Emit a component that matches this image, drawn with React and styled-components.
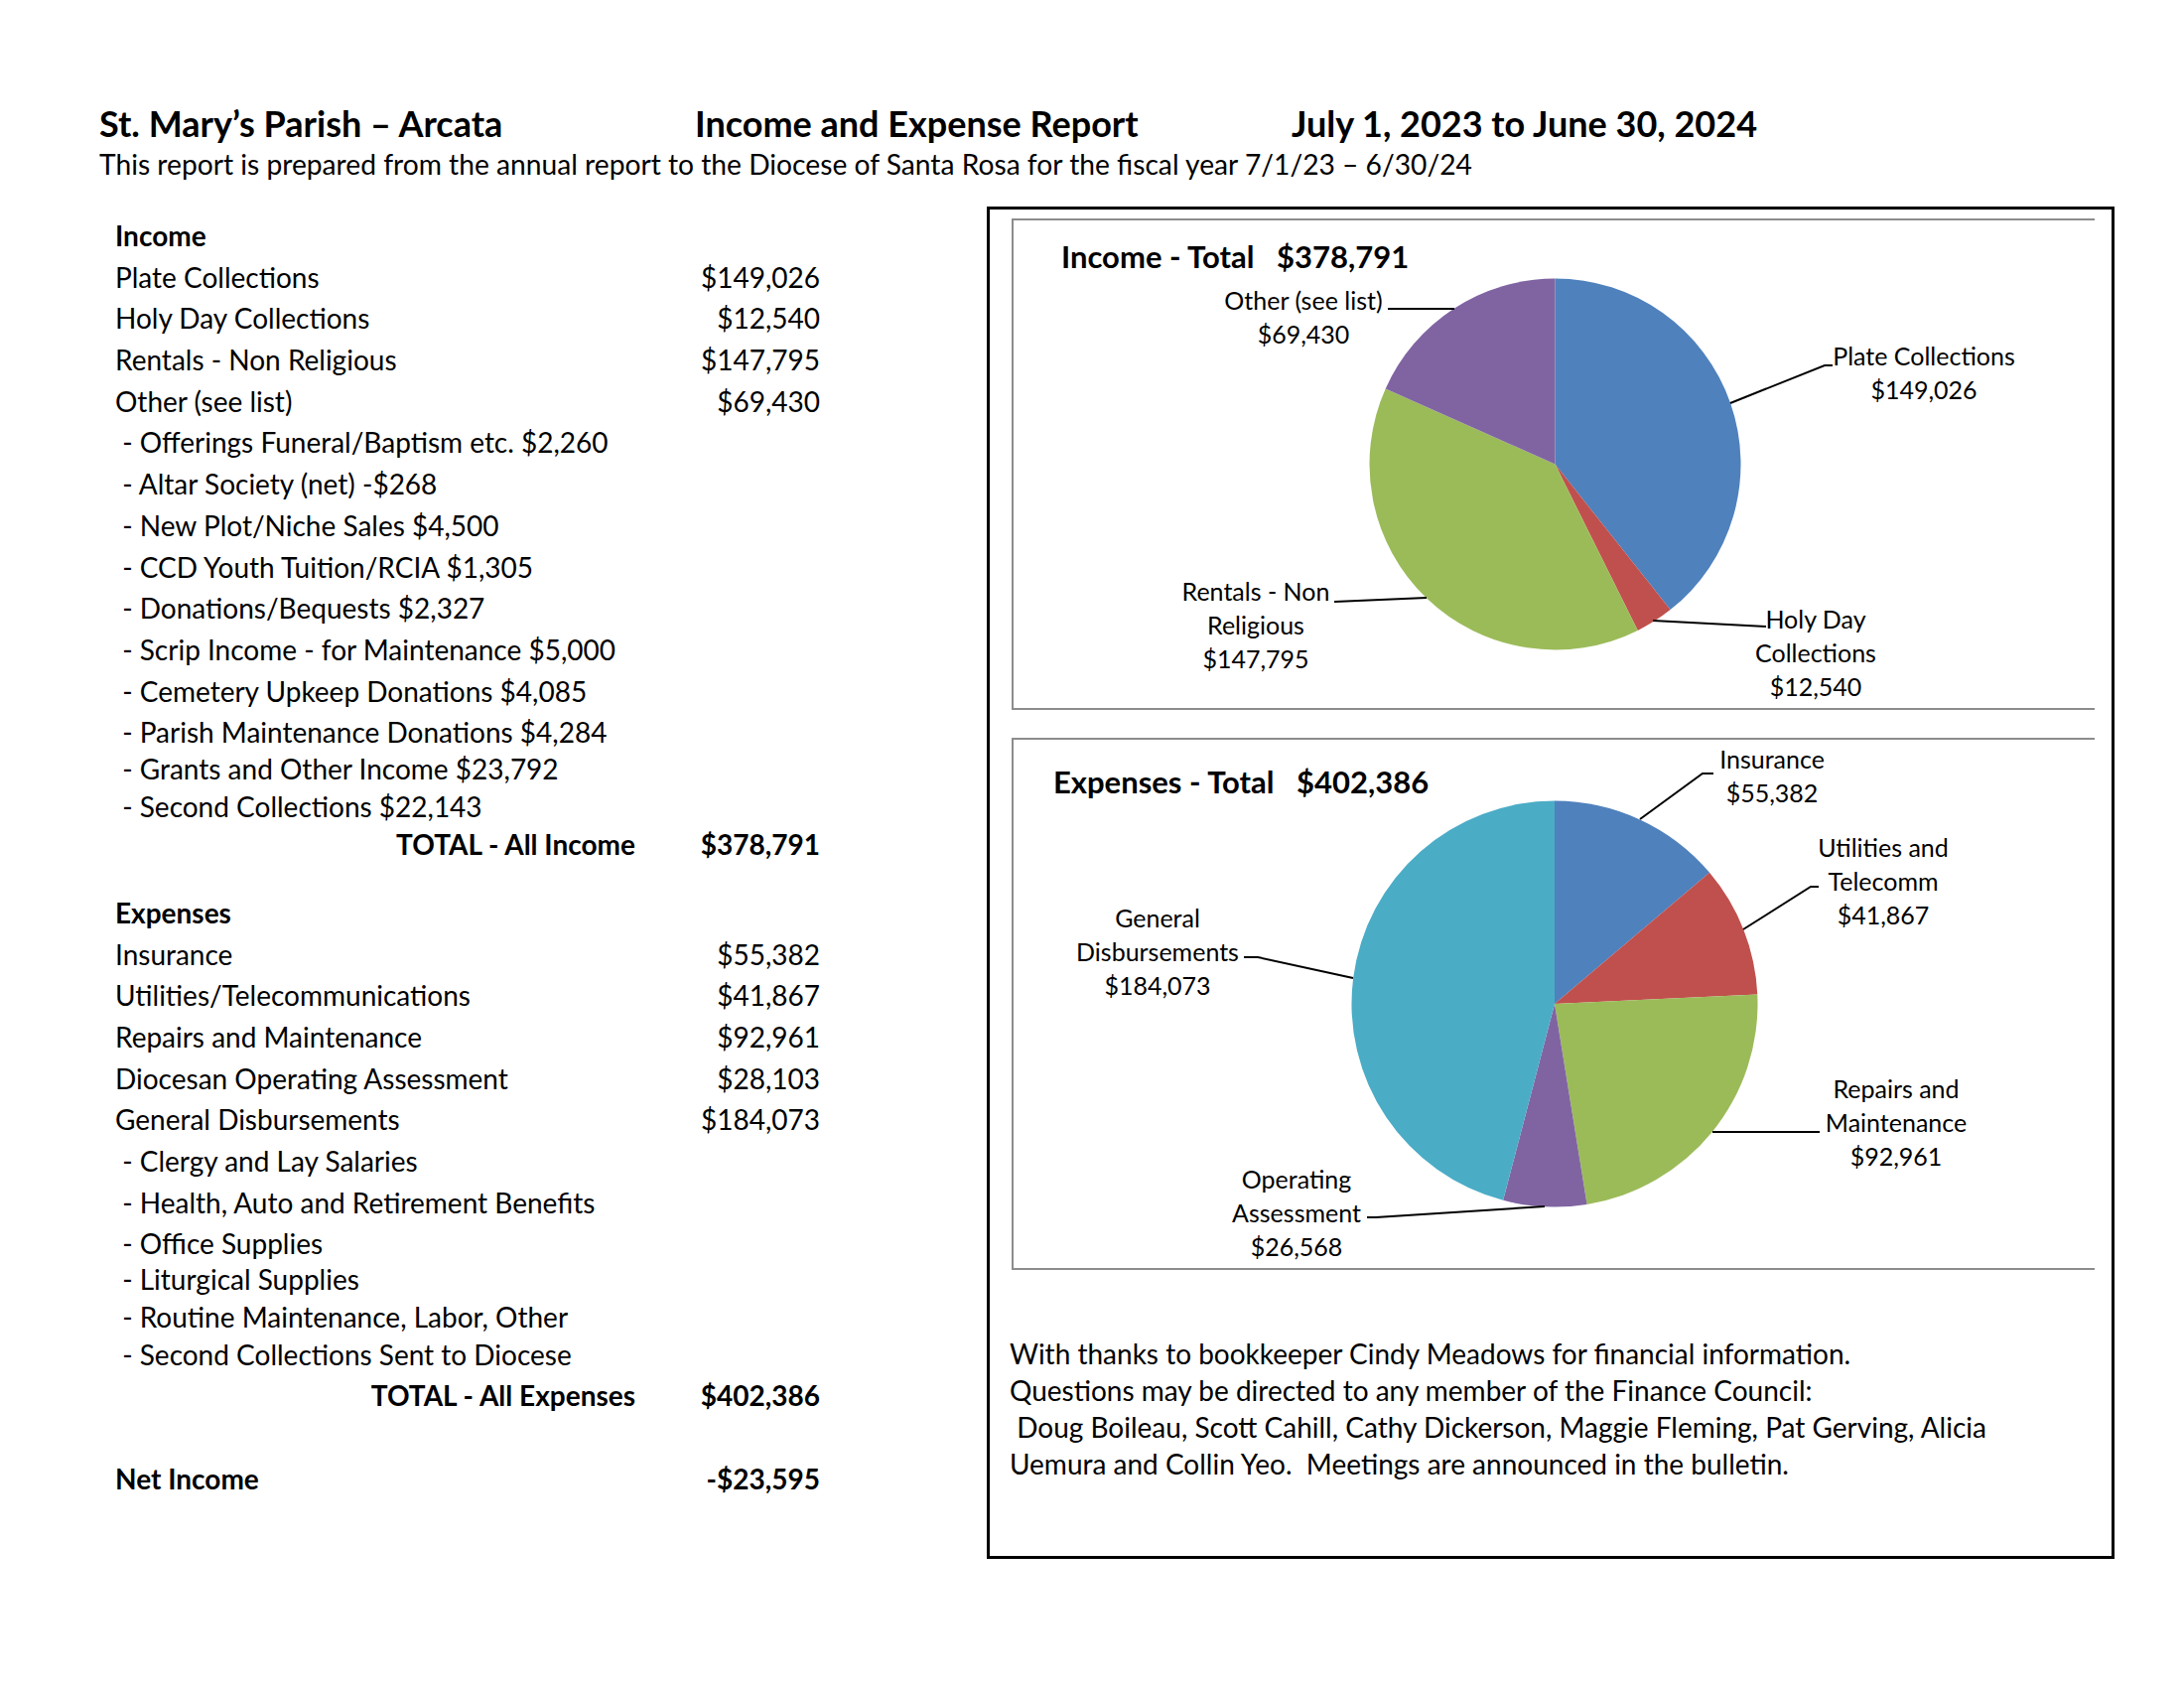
import React from "react";
import styled, { createGlobalStyle } from "styled-components";

const GlobalStyle = createGlobalStyle`
  html, body { margin: 0; padding: 0; background: #fff; }
  body { font-family: Lato, "Open Sans", sans-serif; color: #000; }
`;

const Page = styled.div`
  width: 2200px;
  height: 1700px;
  box-sizing: border-box;
  padding: 102px 0 0 100px;
`;

const Header = styled.div`
  display: grid;
  grid-template-columns: 600px 601px auto;
  font-weight: 700;
  font-size: 36px;
  line-height: 44px;
`;

const Subtitle = styled.div`
  font-size: 28.2px;
  line-height: 38px;
`;

const Main = styled.div`
  display: flex;
  align-items: flex-start;
  margin-top: 24px;
`;

const Ledger = styled.div`
  width: 710px;
  margin-left: 16px;
  padding-top: 9px;
  font-size: 28px;
`;

const Row = styled.div`
  display: flex;
  justify-content: space-between;
  height: 41.7px;
  line-height: 41.7px;
  white-space: pre;
  margin-top: ${(p) => p.$shift || 0}px;
  font-weight: ${(p) => (p.$bold ? 700 : 400)};
`;

const TotalRow = styled.div`
  display: grid;
  grid-template-columns: 524px 186px;
  height: 41.7px;
  line-height: 41.7px;
  font-weight: 700;
  margin-top: ${(p) => p.$shift || 0}px;
`;

const Right = styled.span`
  text-align: right;
`;

const Panel = styled.div`
  width: 1136px;
  height: 1362px;
  box-sizing: border-box;
  margin-left: 168px;
  border: 3px solid #000;
  padding: 9px 17px 0 22px;
`;

const ChartBox = styled.div`
  position: relative;
  box-sizing: border-box;
  height: ${(p) => p.$h}px;
  margin-top: ${(p) => p.$top || 0}px;
  border: 2px solid #8c8c8c;
  border-right: none;
`;

const ChartTitle = styled.div`
  position: relative;
  z-index: 1;
  font-weight: 700;
  font-size: 31px;
  line-height: 36px;
  white-space: pre;
  padding: ${(p) => p.$pad};
`;

const ChartSvg = styled.svg`
  position: absolute;
  top: 0;
  left: 0;
`;

const LabelText = styled.text`
  font-family: Lato, "Open Sans", sans-serif;
  font-size: 25px;
  fill: #000;
`;

const Notes = styled.div`
  margin: 66px 0 0 -2px;
  font-size: 28px;
  line-height: 37px;
  white-space: pre;
`;

const pt = (cx, cy, r, a) => {
  const rad = (a * Math.PI) / 180;
  return [cx + r * Math.sin(rad), cy - r * Math.cos(rad)];
};

const slicePath = (cx, cy, r, a0, a1) => {
  const [x0, y0] = pt(cx, cy, r, a0);
  const [x1, y1] = pt(cx, cy, r, a1);
  const large = a1 - a0 > 180 ? 1 : 0;
  return `M${cx},${cy} L${x0},${y0} A${r},${r} 0 ${large} 1 ${x1},${y1} Z`;
};

const Pie = ({ cx, cy, r, slices }) => {
  const total = slices.reduce((s, x) => s + x.value, 0);
  let a = 0;
  return slices.map((s) => {
    const a0 = a;
    a += (s.value / total) * 360;
    return <path key={s.name} d={slicePath(cx, cy, r, a0, a)} fill={s.color} />;
  });
};

const Label = ({ x, y, lines }) => (
  <LabelText textAnchor="middle">
    {lines.map((l, i) => (
      <tspan key={i} x={x} y={y + 9 + i * 34}>
        {l}
      </tspan>
    ))}
  </LabelText>
);

const Leader = ({ points }) => (
  <polyline points={points} fill="none" stroke="#000" strokeWidth="2" />
);

const income = [
  { name: "plate", value: 149026, color: "#4F81BD" },
  { name: "holy", value: 12540, color: "#C0504D" },
  { name: "rentals", value: 147795, color: "#9BBB59" },
  { name: "other", value: 69430, color: "#8064A2" },
];

const expenses = [
  { name: "insurance", value: 55382, color: "#4F81BD" },
  { name: "utilities", value: 41867, color: "#C0504D" },
  { name: "repairs", value: 92961, color: "#9BBB59" },
  { name: "operating", value: 26568, color: "#8064A2" },
  { name: "general", value: 184073, color: "#4BACC6" },
];

const incomeRows = [
  ["Plate Collections", "$149,026"],
  ["Holy Day Collections", "$12,540"],
  ["Rentals - Non Religious", "$147,795"],
  ["Other (see list)", "$69,430"],
  [" - Offerings Funeral/Baptism etc. $2,260"],
  [" - Altar Society (net) -$268"],
  [" - New Plot/Niche Sales $4,500"],
  [" - CCD Youth Tuition/RCIA $1,305"],
  [" - Donations/Bequests $2,327"],
  [" - Scrip Income - for Maintenance $5,000"],
  [" - Cemetery Upkeep Donations $4,085"],
  [" - Parish Maintenance Donations $4,284"],
  [" - Grants and Other Income $23,792", "", -5],
  [" - Second Collections $22,143", "", -3.7],
];

const expenseRows = [
  ["Insurance", "$55,382"],
  ["Utilities/Telecommunications", "$41,867"],
  ["Repairs and Maintenance", "$92,961"],
  ["Diocesan Operating Assessment", "$28,103"],
  ["General Disbursements", "$184,073"],
  [" - Clergy and Lay Salaries"],
  [" - Health, Auto and Retirement Benefits"],
  [" - Office Supplies"],
  [" - Liturgical Supplies", "", -5.7],
  [" - Routine Maintenance, Labor, Other", "", -3.7],
  [" - Second Collections Sent to Diocese", "", -3.7],
];

const renderRows = (rows) =>
  rows.map(([label, amount, shift]) => (
    <Row key={label} $shift={shift}>
      <span>{label}</span>
      <span>{amount}</span>
    </Row>
  ));

export default function App() {
  return (
    <Page>
      <GlobalStyle />
      <Header>
        <span>St. Mary’s Parish – Arcata</span>
        <span>Income and Expense Report</span>
        <span>July 1, 2023 to June 30, 2024</span>
      </Header>
      <Subtitle>
        This report is prepared from the annual report to the Diocese of Santa Rosa for the fiscal year 7/1/23 – 6/30/24
      </Subtitle>
      <Main>
        <Ledger>
          <Row $bold>Income</Row>
          {renderRows(incomeRows)}
          <TotalRow $shift={-3.7}>
            <Right>TOTAL - All Income</Right>
            <Right>$378,791</Right>
          </TotalRow>
          <Row $bold $shift={27.3}>Expenses</Row>
          {renderRows(expenseRows)}
          <TotalRow $shift={-0.7}>
            <Right>TOTAL - All Expenses</Right>
            <Right>$402,386</Right>
          </TotalRow>
          <Row $bold $shift={42.3}>
            <span>Net Income</span>
            <span>-$23,595</span>
          </Row>
        </Ledger>

        <Panel>
          <ChartBox $h={495}>
            <ChartSvg width="1089" height="491" viewBox="1021 222 1089 491">
              <Pie cx={1566.5} cy={467.5} r={187} slices={income} />
              <Leader points="1398,311 1465,311" />
              <Leader points="1743,406 1838,368 1846,368" />
              <Leader points="1665,625 1779,631" />
              <Leader points="1344,606 1437,602" />
              <Label x={1313} y={303} lines={["Other (see list)", "$69,430"]} />
              <Label x={1938} y={359} lines={["Plate Collections", "$149,026"]} />
              <Label x={1829} y={624} lines={["Holy Day", "Collections", "$12,540"]} />
              <Label x={1265} y={596} lines={["Rentals - Non", "Religious", "$147,795"]} />
            </ChartSvg>
            <ChartTitle $pad="18px 0 0 48px">{"Income - Total   $378,791"}</ChartTitle>
          </ChartBox>

          <ChartBox $h={536} $top={28}>
            <ChartSvg width="1089" height="532" viewBox="1021 745 1089 532">
              <Pie cx={1566} cy={1011} r={204.5} slices={expenses} />
              <Leader points="1652,825 1715,779 1726,779" />
              <Leader points="1756,936 1824,893 1832,893" />
              <Leader points="1725,1140 1833,1140" />
              <Leader points="1556,1215 1386,1226 1377,1226" />
              <Leader points="1363,985 1267,964 1253,964" />
              <Label x={1785} y={765} lines={["Insurance", "$55,382"]} />
              <Label x={1897} y={854} lines={["Utilities and", "Telecomm", "$41,867"]} />
              <Label x={1910} y={1097} lines={["Repairs and", "Maintenance", "$92,961"]} />
              <Label x={1306} y={1188} lines={["Operating", "Assessment", "$26,568"]} />
              <Label x={1166} y={925} lines={["General", "Disbursements", "$184,073"]} />
            </ChartSvg>
            <ChartTitle $pad="24px 0 0 40px">{"Expenses - Total   $402,386"}</ChartTitle>
          </ChartBox>

          <Notes>
            <div>With thanks to bookkeeper Cindy Meadows for financial information.</div>
            <div>Questions may be directed to any member of the Finance Council:</div>
            <div> Doug Boileau, Scott Cahill, Cathy Dickerson, Maggie Fleming, Pat Gerving, Alicia</div>
            <div>Uemura and Collin Yeo.  Meetings are announced in the bulletin.</div>
          </Notes>
        </Panel>
      </Main>
    </Page>
  );
}
